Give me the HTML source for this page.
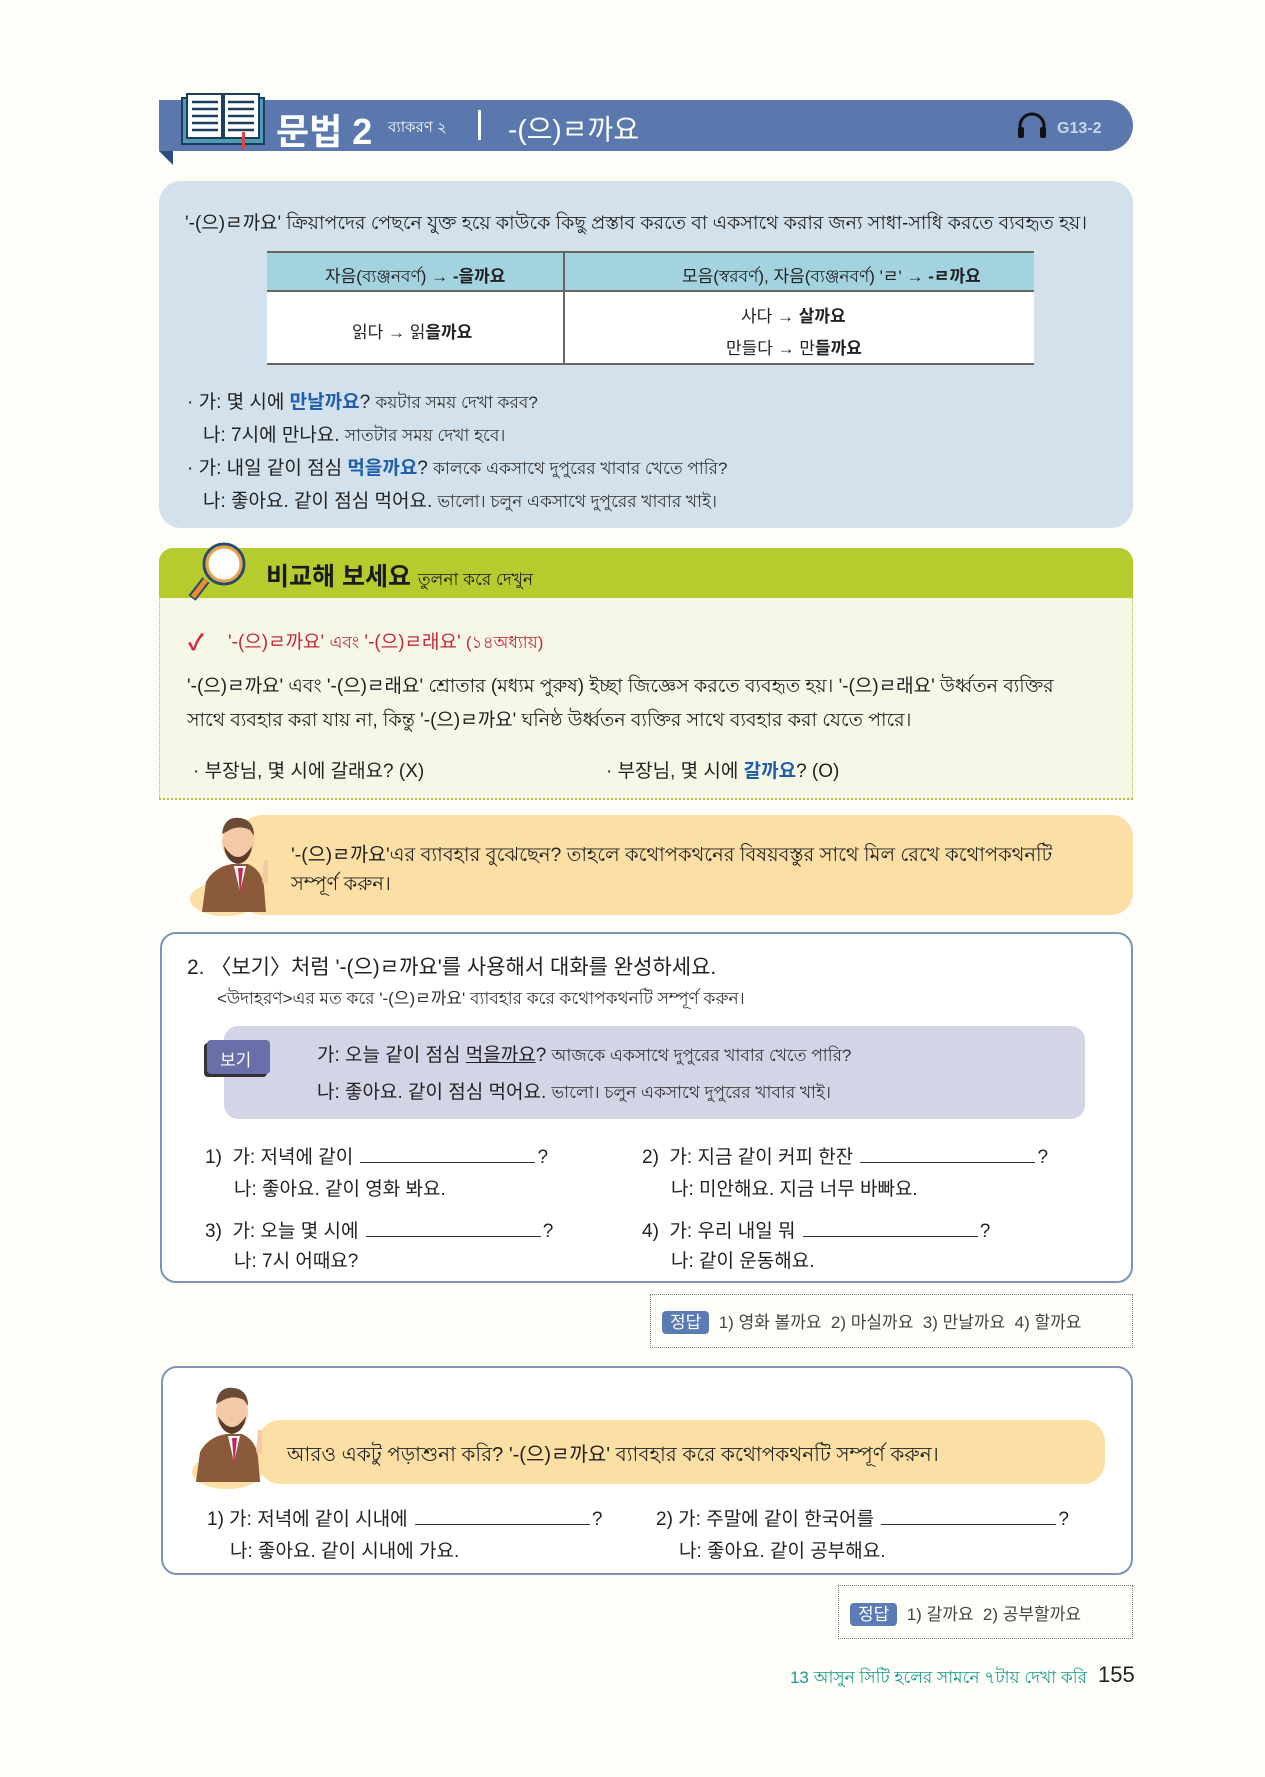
<!DOCTYPE html>
<html><head><meta charset="utf-8"><style>
*{margin:0;padding:0;box-sizing:border-box}
body{width:1265px;height:1777px;background:#fefef8;position:relative;overflow:hidden;font-family:"Liberation Sans","Noto Sans CJK KR",sans-serif;color:#222}
.a{position:absolute;white-space:nowrap}
.ko{font-size:19px}
.bn{font-size:17px;color:#333}
.blue{color:#1f5fae;font-weight:bold}
.b{font-weight:bold}
.line{display:inline-block;width:175px;border-bottom:1.5px solid #333;margin:0 2px;height:14px}
.tag{background:#5b7bb5;color:#fff;border-radius:4px;font-size:17px;padding:2px 8px}
</style></head><body>
<!-- header -->
<div class="a" style="left:159px;top:100px;width:974px;height:51px;background:#5a78ae;border-radius:0 26px 26px 0"></div>
<div class="a" style="left:159px;top:151px;width:0;height:0;border-top:14px solid #2e4a82;border-left:14px solid transparent"></div>
<svg class="a" style="left:180px;top:92px" width="86" height="58" viewBox="0 0 86 58">
<rect x="2" y="6" width="82" height="46" fill="#4e9bb3" stroke="#1c3d5c" stroke-width="2"/>
<rect x="7" y="2" width="35" height="44" fill="#fff" stroke="#1c3d5c" stroke-width="2"/>
<rect x="44" y="2" width="35" height="44" fill="#fff" stroke="#1c3d5c" stroke-width="2"/>
<g stroke="#1c3d5c" stroke-width="2.5"><line x1="12" y1="10" x2="38" y2="10"/><line x1="12" y1="17" x2="38" y2="17"/><line x1="12" y1="24" x2="38" y2="24"/><line x1="12" y1="31" x2="38" y2="31"/><line x1="12" y1="38" x2="38" y2="38"/><line x1="48" y1="10" x2="74" y2="10"/><line x1="48" y1="17" x2="74" y2="17"/><line x1="48" y1="24" x2="74" y2="24"/><line x1="48" y1="31" x2="74" y2="31"/><line x1="48" y1="38" x2="74" y2="38"/></g>
<rect x="62" y="40" width="3" height="17" fill="#d44"/></svg>
<div class="a" style="left:276px;top:103px;color:#fff;font-size:36px;font-weight:bold">문법 2</div>
<div class="a" style="left:388px;top:116px;color:#fff;font-size:15px">ব্যাকরণ ২</div>
<div class="a" style="left:478px;top:110px;width:3px;height:30px;background:#fff"></div>
<div class="a" style="left:508px;top:108px;color:#fff;font-size:28px">-(으)ㄹ까요</div>
<svg class="a" style="left:1016px;top:112px" width="36" height="28" viewBox="0 0 36 28"><path d="M4 24 V14 A12 12 0 0 1 28 14 V24" fill="none" stroke="#111" stroke-width="3"/><rect x="2" y="15" width="6" height="11" rx="2" fill="#111"/><rect x="24" y="15" width="6" height="11" rx="2" fill="#111"/></svg>
<div class="a" style="left:1057px;top:120px;color:#c9d6ea;font-size:16px;font-weight:bold">G13-2</div>

<!-- blue box -->
<div class="a" style="left:159px;top:181px;width:974px;height:347px;background:#d3e1ec;border-radius:22px"></div>
<div class="a bn" style="left:185px;top:208px;font-size:19px;color:#222">'-(으)ㄹ까요' ক্রিয়াপদের পেছনে যুক্ত হয়ে কাউকে কিছু প্রস্তাব করতে বা একসাথে করার জন্য সাধা-সাধি করতে ব্যবহৃত হয়।</div>
<div class="a" style="left:267px;top:251px;width:767px;height:114px;background:#fff;border-top:2px solid #666;border-bottom:2px solid #666"></div>
<div class="a" style="left:267px;top:253px;width:767px;height:39px;background:#a3d3df;border-bottom:2px solid #666"></div>
<div class="a" style="left:563px;top:251px;width:2px;height:114px;background:#666"></div>
<div class="a" style="left:325px;top:262px;font-size:17px">자음(ব্যঞ্জনবর্ণ) → <b>-을까요</b></div>
<div class="a" style="left:682px;top:262px;font-size:17px">모음(স্বরবর্ণ), 자음(ব্যঞ্জনবর্ণ) 'ㄹ' → <b>-ㄹ까요</b></div>
<div class="a" style="left:352px;top:318px;font-size:17px">읽다 → 읽<b>을까요</b></div>
<div class="a" style="left:741px;top:302px;font-size:17px">사다 → <b>살까요</b></div>
<div class="a" style="left:726px;top:334px;font-size:17px">만들다 → 만<b>들까요</b></div>
<div class="a ko" style="left:187px;top:387px">· 가: 몇 시에 <span class="blue">만날까요</span>? <span class="bn">কয়টার সময় দেখা করব?</span></div>
<div class="a ko" style="left:203px;top:420px">나: 7시에 만나요. <span class="bn">সাতটার সময় দেখা হবে।</span></div>
<div class="a ko" style="left:187px;top:453px">· 가: 내일 같이 점심 <span class="blue">먹을까요</span>? <span class="bn">কালকে একসাথে দুপুরের খাবার খেতে পারি?</span></div>
<div class="a ko" style="left:203px;top:486px">나: 좋아요. 같이 점심 먹어요. <span class="bn">ভালো। চলুন একসাথে দুপুরের খাবার খাই।</span></div>

<!-- compare -->
<div class="a" style="left:159px;top:548px;width:974px;height:252px;background:#f6f7e6;border-left:1px dotted #b5c23a;border-right:1px dotted #b5c23a;border-bottom:2px dotted #b5c23a;border-radius:14px 14px 0 0"></div>
<div class="a" style="left:159px;top:548px;width:974px;height:50px;background:#b5cb2e;border-radius:14px 14px 0 0"></div>
<svg class="a" style="left:188px;top:540px" width="66" height="66" viewBox="0 0 66 66"><line x1="18" y1="40" x2="4" y2="58" stroke="#2b4b6b" stroke-width="9"/><line x1="18" y1="40" x2="5" y2="57" stroke="#f08a2a" stroke-width="5"/><circle cx="36" cy="24" r="20" fill="#fff" stroke="#2b4b6b" stroke-width="3"/><circle cx="36" cy="24" r="17" fill="none" stroke="#e8a24a" stroke-width="3"/></svg>
<div class="a" style="left:266px;top:557px;font-size:25px;font-weight:bold;color:#1b1b1b">비교해 보세요 <span style="font-size:17px;font-weight:normal">তুলনা করে দেখুন</span></div>
<div class="a" style="left:188px;top:625px;color:#d0263b;font-size:22px;font-weight:bold">✓</div>
<div class="a" style="left:228px;top:627px;color:#c8283a;font-size:19px">'-(으)ㄹ까요' <span style="font-size:17px">এবং</span> '-(으)ㄹ래요' <span style="font-size:17px">(১৪অধ্যায়)</span></div>
<div class="a bn" style="left:187px;top:671px;font-size:19px;color:#222">'-(으)ㄹ까요' এবং '-(으)ㄹ래요' শ্রোতার (মধ্যম পুরুষ) ইচ্ছা জিজ্ঞেস করতে ব্যবহৃত হয়। '-(으)ㄹ래요' উর্ধ্বতন ব্যক্তির</div>
<div class="a bn" style="left:187px;top:705px;font-size:19px;color:#222">সাথে ব্যবহার করা যায় না, কিন্তু '-(으)ㄹ까요' ঘনিষ্ঠ উর্ধ্বতন ব্যক্তির সাথে ব্যবহার করা যেতে পারে।</div>
<div class="a ko" style="left:193px;top:756px">· 부장님, 몇 시에 갈래요? (X)</div>
<div class="a ko" style="left:606px;top:756px">· 부장님, 몇 시에 <span class="blue">갈까요</span>? (O)</div>

<!-- speech 1 -->
<div class="a" style="left:240px;top:815px;width:893px;height:100px;background:#fbdfa5;border-radius:22px"></div>
<div class="a" style="left:190px;top:882px;width:70px;height:34px;background:#fbdfa5;border-radius:50%"></div>
<svg class="a" style="left:192px;top:812px" width="90" height="100" viewBox="0 0 90 100"><path d="M10 100 L14 70 Q22 55 40 52 L56 52 Q70 58 72 75 L74 100 Z" fill="#8b5a3a"/><path d="M42 54 L48 80 L54 54 Z" fill="#fff"/><path d="M46 56 L48 84 L51 56 Z" fill="#c8265a"/><ellipse cx="46" cy="30" rx="16" ry="20" fill="#f3c9a8"/><path d="M30 22 Q32 4 48 6 Q62 8 62 24 L58 18 Q46 12 34 20Z" fill="#6b4a36"/><path d="M32 34 Q46 56 60 34 Q58 50 46 52 Q34 50 32 34Z" fill="#5a3a28"/><path d="M70 70 L72 48 L76 48 L76 72Z" fill="#f3c9a8"/></svg>
<div class="a bn" style="left:291px;top:838px;font-size:19.5px;color:#222">'-(으)ㄹ까요'এর ব্যাবহার বুঝেছেন? তাহলে কথোপকথনের বিষয়বস্তুর সাথে মিল রেখে কথোপকথনটি</div>
<div class="a bn" style="left:291px;top:870px;font-size:19.5px;color:#222">সম্পূর্ণ করুন।</div>

<!-- exercise -->
<div class="a" style="left:160px;top:932px;width:973px;height:351px;border:2px solid #7d93b9;border-radius:16px;background:#fff"></div>
<div class="a" style="left:187px;top:951px;font-size:21px">2. 〈보기〉처럼 '-(으)ㄹ까요'를 사용해서 대화를 완성하세요.</div>
<div class="a bn" style="left:217px;top:984px">&lt;উদাহরণ&gt;এর মত করে '-(으)ㄹ까요' ব্যাবহার করে কথোপকথনটি সম্পূর্ণ করুন।</div>
<div class="a" style="left:224px;top:1026px;width:861px;height:93px;background:#d4d4e7;border-radius:14px"></div>
<div class="a" style="left:207px;top:1040px;width:63px;height:34px;background:#6a6ea9;border-radius:4px;color:#fff;font-size:17px;padding:6px 0 0 13px;box-shadow:-3px 3px 0 #333">보기</div>
<div class="a ko" style="left:317px;top:1040px">가: 오늘 같이 점심 <u>먹을까요</u>? <span class="bn">আজকে একসাথে দুপুরের খাবার খেতে পারি?</span></div>
<div class="a ko" style="left:317px;top:1077px">나: 좋아요. 같이 점심 먹어요. <span class="bn">ভালো। চলুন একসাথে দুপুরের খাবার খাই।</span></div>
<div class="a ko" style="left:205px;top:1142px">1) &nbsp;가: 저녁에 같이 <span class="line"></span>?</div>
<div class="a ko" style="left:234px;top:1174px">나: 좋아요. 같이 영화 봐요.</div>
<div class="a ko" style="left:642px;top:1142px">2) &nbsp;가: 지금 같이 커피 한잔 <span class="line"></span>?</div>
<div class="a ko" style="left:671px;top:1174px">나: 미안해요. 지금 너무 바빠요.</div>
<div class="a ko" style="left:205px;top:1216px">3) &nbsp;가: 오늘 몇 시에 <span class="line"></span>?</div>
<div class="a ko" style="left:234px;top:1246px">나: 7시 어때요?</div>
<div class="a ko" style="left:642px;top:1216px">4) &nbsp;가: 우리 내일 뭐 <span class="line"></span>?</div>
<div class="a ko" style="left:671px;top:1246px">나: 같이 운동해요.</div>
<div class="a" style="left:650px;top:1294px;width:483px;height:54px;border:1px dotted #777"></div>
<div class="a" style="left:662px;top:1308px;font-size:17px;color:#444"><span class="tag">정답</span> &nbsp;1) 영화 볼까요 &nbsp;2) 마실까요 &nbsp;3) 만날까요 &nbsp;4) 할까요</div>

<!-- second box -->
<div class="a" style="left:161px;top:1366px;width:972px;height:209px;border:2px solid #7d93b9;border-radius:16px;background:#fff"></div>
<div class="a" style="left:258px;top:1420px;width:847px;height:64px;background:#fbdfa5;border-radius:22px"></div>
<div class="a" style="left:192px;top:1455px;width:70px;height:34px;background:#fbdfa5;border-radius:50%"></div>
<svg class="a" style="left:186px;top:1382px" width="90" height="100" viewBox="0 0 90 100"><path d="M10 100 L14 70 Q22 55 40 52 L56 52 Q70 58 72 75 L74 100 Z" fill="#8b5a3a"/><path d="M42 54 L48 80 L54 54 Z" fill="#fff"/><path d="M46 56 L48 84 L51 56 Z" fill="#c8265a"/><ellipse cx="46" cy="30" rx="16" ry="20" fill="#f3c9a8"/><path d="M30 22 Q32 4 48 6 Q62 8 62 24 L58 18 Q46 12 34 20Z" fill="#6b4a36"/><path d="M32 34 Q46 56 60 34 Q58 50 46 52 Q34 50 32 34Z" fill="#5a3a28"/><path d="M70 70 L72 48 L76 48 L76 72Z" fill="#f3c9a8"/></svg>
<div class="a bn" style="left:287px;top:1438px;font-size:20px;color:#222">আরও একটু পড়াশুনা করি? '-(으)ㄹ까요' ব্যাবহার করে কথোপকথনটি সম্পূর্ণ করুন।</div>
<div class="a ko" style="left:207px;top:1504px">1) 가: 저녁에 같이 시내에 <span class="line"></span>?</div>
<div class="a ko" style="left:230px;top:1536px">나: 좋아요. 같이 시내에 가요.</div>
<div class="a ko" style="left:656px;top:1504px">2) 가: 주말에 같이 한국어를 <span class="line"></span>?</div>
<div class="a ko" style="left:679px;top:1536px">나: 좋아요. 같이 공부해요.</div>
<div class="a" style="left:838px;top:1585px;width:295px;height:54px;border:1px dotted #777"></div>
<div class="a" style="left:850px;top:1600px;font-size:17px;color:#444"><span class="tag">정답</span> &nbsp;1) 갈까요 &nbsp;2) 공부할까요</div>

<div class="a" style="right:178px;top:1665px;font-size:17px;color:#1b9a8c">13 আসুন সিটি হলের সামনে ৭টায় দেখা করি</div>
<div class="a" style="left:1098px;top:1662px;font-size:22px;color:#222">155</div>
</body></html>
